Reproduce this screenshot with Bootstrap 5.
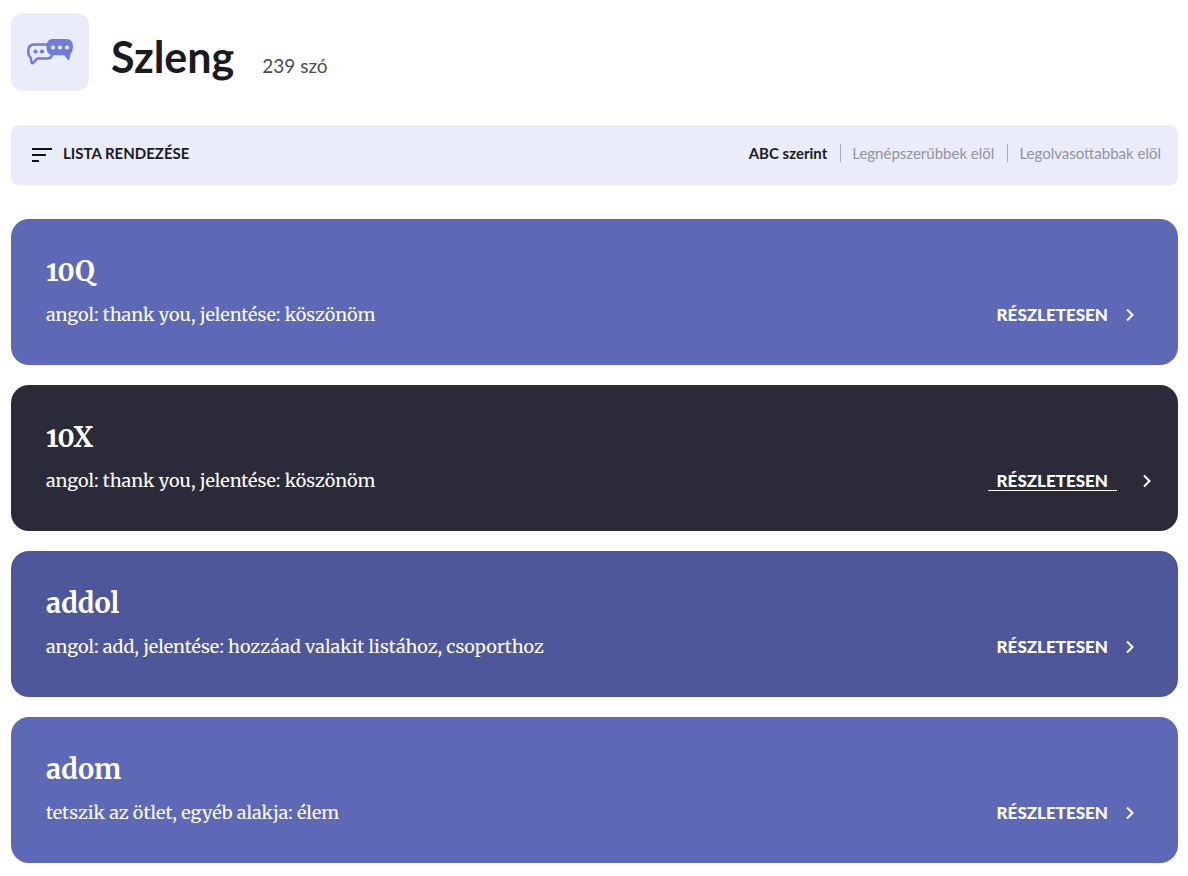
<!DOCTYPE html>
<html lang="hu">
<head>
<meta charset="utf-8">
<meta name="viewport" content="width=device-width, initial-scale=1">
<title>Szleng – 239 szó</title>
<link href="https://cdn.jsdelivr.net/npm/bootstrap@5.3.0/dist/css/bootstrap.min.css" rel="stylesheet">
<style>
  body { font-family: Lato, sans-serif; color: #1a1b1f; background: #fff; }
  .page { padding: 13px 10px 12px 11px; }
  .topic-icon { width: 78px; height: 78px; border-radius: 12px; background: #eaecfa; }
  .title-row { margin: 10px 0 0 22px; gap: 28px; }
  .page-title { font-size: 43px; line-height: 50px; font-weight: 700; }
  .word-count { font-size: 19px; line-height: 24px; color: #4c4d52; }
  .sort-bar { min-height: 60px; margin-top: 34px; padding: 0 17px 4px 21px; border-radius: 8px; background: #eaecfa; font-size: 15px; line-height: 18px; }
  .sort-head { gap: 11px; }
  .sort-title { font-size: 15px; line-height: 18px; font-weight: 700; }
  .sort-links li + li { border-left: 1px solid #a9abb8; margin-left: 13px; padding-left: 11px; }
  .sort-links a { color: #92949f; text-decoration: none; }
  .sort-links a.active { color: #1a1b1f; font-weight: 700; }
  .word-list { gap: 20px; margin-top: 34px; }
  .word-card { min-height: 146px; padding: 34px 36px 32px 35px; border-radius: 18px; color: #fff; background: #5d68b7; }
  .word-card.tone-deep { background: #4e5799; }
  .word-card.tone-dark { background: #2b2a38; }
  .word-name, .word-text { font-family: Merriweather, "Liberation Serif", serif; font-variant-numeric: oldstyle-nums; }
  .word-name { font-size: 27px; line-height: 36px; font-weight: 700; margin-bottom: 13px; }
  .word-text { font-size: 18px; line-height: 26px; }
  .more-link { color: #fff; font-size: 17px; line-height: 18px; font-weight: 900; text-decoration: none; }
  .more-link span { padding: 0 9px; border-bottom: 1px solid transparent; }
  .more-link svg { margin: 0 7px 0 8px; }
  .tone-dark .more-link span { border-color: #fff; }
  .tone-dark .more-link { margin-right: -17px; gap: 17px; }
</style>
</head>
<body>
<main class="page">
  <header class="d-flex align-items-center">
    <div class="topic-icon d-flex align-items-center justify-content-center flex-shrink-0">
      <svg width="48" height="28" viewBox="0 0 48 28" aria-hidden="true">
        <path d="M21 6.500H8.500Q2.200 6.500 2.200 13.500q0 4 2.700 6.500l.6 4.300q.5 1.700 1.800.5l3.700-4.300h10.500q3.500 0 4.800-4" fill="none" stroke="#6f7cdc" stroke-width="2.500" stroke-linejoin="round"/>
        <circle cx="9.500" cy="13.500" r="2.100" fill="#6f7cdc"/><circle cx="16" cy="13.500" r="2.100" fill="#6f7cdc"/>
        <path d="M26.500 1h14Q47 1 47 8.500q0 4.500-2.300 7l-1.200 5.500q-.6 1.600-1.900.4l-3.300-4.200H27Q20.500 17 20.500 9T26.500 1Z" fill="#6f7cdc"/>
        <g fill="#eaecfa"><circle cx="27" cy="9.500" r="2.100"/><circle cx="34" cy="9.500" r="2.100"/><circle cx="41" cy="9.500" r="2.100"/></g>
      </svg>
    </div>
    <div class="title-row d-flex align-items-baseline">
      <h1 class="page-title mb-0">Szleng</h1>
      <span class="word-count">239 szó</span>
    </div>
  </header>

  <nav class="sort-bar d-flex flex-wrap align-items-center justify-content-between" aria-label="Lista rendezése">
    <div class="sort-head d-flex align-items-center">
      <svg class="mt-1" width="20" height="14" viewBox="0 0 20 14" aria-hidden="true"><path d="M0 1h20M0 7h14M0 13h7" stroke="#111216" stroke-width="2"/></svg>
      <h2 class="sort-title mb-0">LISTA RENDEZÉSE</h2>
    </div>
    <ul class="sort-links list-unstyled d-flex flex-wrap mb-0">
      <li><a class="active" href="#abc" aria-current="true">ABC szerint</a></li>
      <li><a href="#nepszeru">Legnépszerűbbek elöl</a></li>
      <li><a href="#olvasott">Legolvasottabbak elöl</a></li>
    </ul>
  </nav>

  <section class="word-list d-grid" aria-label="Szavak">
    <article class="word-card">
      <h3 class="word-name">10Q</h3>
      <div class="d-flex align-items-center justify-content-between">
        <p class="word-text mb-0">angol: thank you, jelentése: köszönöm</p>
        <a class="more-link d-flex align-items-center" href="#10q"><span>RÉSZLETESEN</span><svg width="10" height="14" viewBox="0 0 10 14" aria-hidden="true"><path d="M2 1.500 7.500 7 2 12.500" fill="none" stroke="#fff" stroke-width="2"/></svg></a>
      </div>
    </article>
    <article class="word-card tone-dark">
      <h3 class="word-name">10X</h3>
      <div class="d-flex align-items-center justify-content-between">
        <p class="word-text mb-0">angol: thank you, jelentése: köszönöm</p>
        <a class="more-link d-flex align-items-center" href="#10x"><span>RÉSZLETESEN</span><svg width="10" height="14" viewBox="0 0 10 14" aria-hidden="true"><path d="M2 1.500 7.500 7 2 12.500" fill="none" stroke="#fff" stroke-width="2"/></svg></a>
      </div>
    </article>
    <article class="word-card tone-deep">
      <h3 class="word-name">addol</h3>
      <div class="d-flex align-items-center justify-content-between">
        <p class="word-text mb-0">angol: add, jelentése: hozzáad valakit listához, csoporthoz</p>
        <a class="more-link d-flex align-items-center" href="#addol"><span>RÉSZLETESEN</span><svg width="10" height="14" viewBox="0 0 10 14" aria-hidden="true"><path d="M2 1.500 7.500 7 2 12.500" fill="none" stroke="#fff" stroke-width="2"/></svg></a>
      </div>
    </article>
    <article class="word-card">
      <h3 class="word-name">adom</h3>
      <div class="d-flex align-items-center justify-content-between">
        <p class="word-text mb-0">tetszik az ötlet, egyéb alakja: élem</p>
        <a class="more-link d-flex align-items-center" href="#adom"><span>RÉSZLETESEN</span><svg width="10" height="14" viewBox="0 0 10 14" aria-hidden="true"><path d="M2 1.500 7.500 7 2 12.500" fill="none" stroke="#fff" stroke-width="2"/></svg></a>
      </div>
    </article>
  </section>
</main>
<script src="https://cdn.jsdelivr.net/npm/bootstrap@5.3.0/dist/js/bootstrap.bundle.min.js"></script>
</body>
</html>
